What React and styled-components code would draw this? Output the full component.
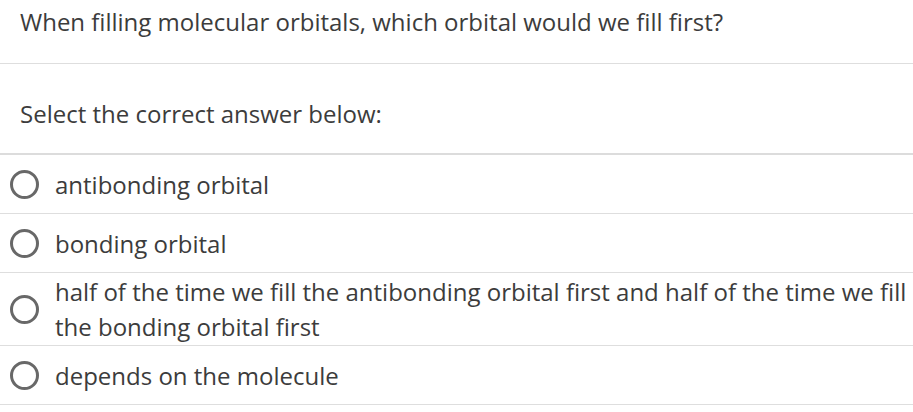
import styled, { createGlobalStyle } from "styled-components";

const GlobalStyle = createGlobalStyle`
    body {
        margin: 0;
        background: #fff;
        font-family: "Open Sans", "Liberation Sans", sans-serif;
        color: #3c3c3c;
    }
`;

const Page = styled.div`
    width: 913px;
`;

const Question = styled.div`
    padding: 4px 20px 0;
    height: 59px;
    font-size: 24px;
    line-height: 35px;
    border-bottom: 1px solid #dedede;
`;

const Prompt = styled.div`
    padding: 9px 20px 0;
    height: 91px;
    display: flex;
    align-items: center;
    box-sizing: border-box;
    font-size: 24px;
    border-bottom: 2px solid #dcdcdc;
`;

const OptionList = styled.div`
    display: flex;
    flex-direction: column;
`;

const Option = styled.label`
    display: flex;
    align-items: center;
    gap: 16px;
    min-height: 59px;
    padding: 1px 0 1px 10px;
    box-sizing: border-box;
    border-bottom: 1px solid #dedede;
    cursor: pointer;
`;

const Radio = styled.span`
    flex: none;
    width: 29px;
    height: 29px;
    box-sizing: border-box;
    border: 3px solid #686868;
    border-radius: 50%;
`;

const OptionText = styled.span`
    font-size: 24px;
    line-height: 35px;
`;

const options = [
    "antibonding orbital",
    "bonding orbital",
    "half of the time we fill the antibonding orbital first and half of the time we fill the bonding orbital first",
    "depends on the molecule",
];

const App = () => {
    return <Page>
        <GlobalStyle />
        <Question>When filling molecular orbitals, which orbital would we fill first?</Question>
        <Prompt>Select the correct answer below:</Prompt>
        <OptionList>
            {options.map((text) => (
                <Option key={text}>
                    <Radio />
                    <OptionText>{text}</OptionText>
                </Option>
            ))}
        </OptionList>
    </Page>
}

export default App;
